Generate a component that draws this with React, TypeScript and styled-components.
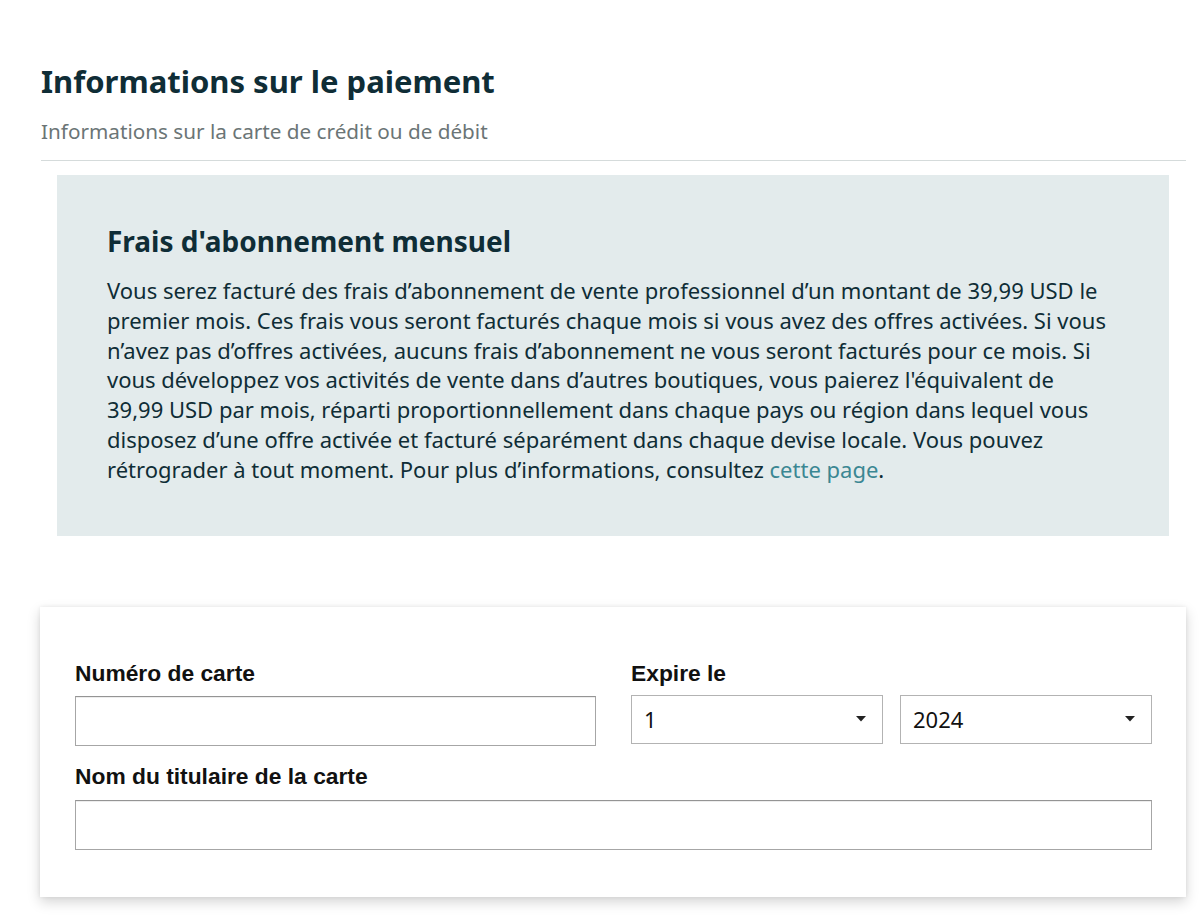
import React from "react";
import styled, { createGlobalStyle } from "styled-components";

const GlobalStyle = createGlobalStyle`
  html, body { margin: 0; padding: 0; background: #ffffff; }
  body { font-family: "Noto Sans", "Open Sans", sans-serif; -webkit-font-smoothing: antialiased; }
  * { box-sizing: border-box; }
`;

const Page = styled.main`
  width: 1200px;
  padding: 61px 14px 0 41px;
`;

const Title = styled.h1`
  margin: 0;
  font-family: "Noto Sans", sans-serif;
  font-size: 31px;
  line-height: 40px;
  font-weight: 700;
  color: #0f2d36;
`;

const Subtitle = styled.p`
  margin: 17px 0 0;
  font-size: 20.7px;
  line-height: 26px;
  color: #6b7576;
`;

const Divider = styled.hr`
  margin: 16px 0 0;
  border: 0;
  height: 1px;
  background: #d5dbdb;
`;

const InfoBox = styled.section`
  margin: 14px 17px 0 16px;
  padding: 48px 20px 51px 50px;
  background: #e3ebec;
  color: #0f2d36;
`;

const InfoTitle = styled.h2`
  margin: 0;
  font-size: 28px;
  line-height: 36px;
  font-weight: 700;
  color: #0f2d36;
`;

const InfoText = styled.p`
  margin: 17px 0 0;
  font-size: 22px;
  line-height: 29.8px;
  white-space: nowrap;
`;

const Link = styled.a`
  color: #3b8793;
  text-decoration: none;
`;

const Card = styled.section`
  margin: 71px 0 23px -1px;
  padding: 53px 34px 47px 35px;
  background: #ffffff;
  box-shadow: 0 5px 12px rgba(0, 0, 0, 0.17), 0 0 4px rgba(0, 0, 0, 0.07);
  display: grid;
  grid-template-columns: 1fr 1fr;
  column-gap: 35px;
`;

const Field = styled.div<{ $wide?: boolean; $top?: number }>`
  grid-column: ${(p) => (p.$wide ? "1 / -1" : "auto")};
  margin-top: ${(p) => p.$top ?? 0}px;
  display: flex;
  flex-direction: column;
`;

const Label = styled.label<{ $gap: number }>`
  font-family: "Liberation Sans", Arial, sans-serif;
  font-weight: 700;
  font-size: 22.8px;
  line-height: 26px;
  color: #111111;
  margin-bottom: ${(p) => p.$gap}px;
`;

const TextInput = styled.input`
  width: 100%;
  height: 50px;
  border: 1px solid #a6a6a6;
  border-top-color: #949494;
  border-radius: 0;
  box-shadow: 0 1px 0 rgba(0, 0, 0, 0.07) inset, 0 1px 0 rgba(255, 255, 255, 0.5);
  background: #ffffff;
  font-family: "Noto Sans", sans-serif;
  font-size: 22px;
  padding: 0 12px;
  outline: none;
`;

const SelectRow = styled.div`
  display: grid;
  grid-template-columns: 1fr 1fr;
  column-gap: 17px;
`;

const Select = styled.div`
  height: 49px;
  border: 1px solid #b3b3b3;
  background: #ffffff;
  display: flex;
  align-items: center;
  justify-content: space-between;
  padding: 0 16px 0 12px;
  font-family: "Noto Sans", sans-serif;
  font-size: 22px;
  color: #111111;
`;

const Caret = () => (
  <svg width="10" height="6" viewBox="0 0 10 6" aria-hidden="true">
    <path d="M0 0 L10 0 L5 5.5 Z" fill="#222" />
  </svg>
);

export default function App() {
  return (
    <Page>
      <GlobalStyle />
      <Title>Informations sur le paiement</Title>
      <Subtitle>Informations sur la carte de crédit ou de débit</Subtitle>
      <Divider />
      <InfoBox>
        <InfoTitle>Frais d'abonnement mensuel</InfoTitle>
        <InfoText>
          Vous serez facturé des frais d’abonnement de vente professionnel d’un montant de 39,99 USD le
          <br />
          premier mois. Ces frais vous seront facturés chaque mois si vous avez des offres activées. Si vous
          <br />
          n’avez pas d’offres activées, aucuns frais d’abonnement ne vous seront facturés pour ce mois. Si
          <br />
          vous développez vos activités de vente dans d’autres boutiques, vous paierez l'équivalent de
          <br />
          39,99 USD par mois, réparti proportionnellement dans chaque pays ou région dans lequel vous
          <br />
          disposez d’une offre activée et facturé séparément dans chaque devise locale. Vous pouvez
          <br />
          rétrograder à tout moment. Pour plus d’informations, consultez <Link href="#">cette page</Link>.
        </InfoText>
      </InfoBox>
      <Card>
        <Field>
          <Label $gap={10}>Numéro de carte</Label>
          <TextInput type="text" />
        </Field>
        <Field>
          <Label $gap={9}>Expire le</Label>
          <SelectRow>
            <Select>
              <span>1</span>
              <Caret />
            </Select>
            <Select>
              <span>2024</span>
              <Caret />
            </Select>
          </SelectRow>
        </Field>
        <Field $wide $top={17}>
          <Label $gap={11}>Nom du titulaire de la carte</Label>
          <TextInput type="text" />
        </Field>
      </Card>
    </Page>
  );
}
